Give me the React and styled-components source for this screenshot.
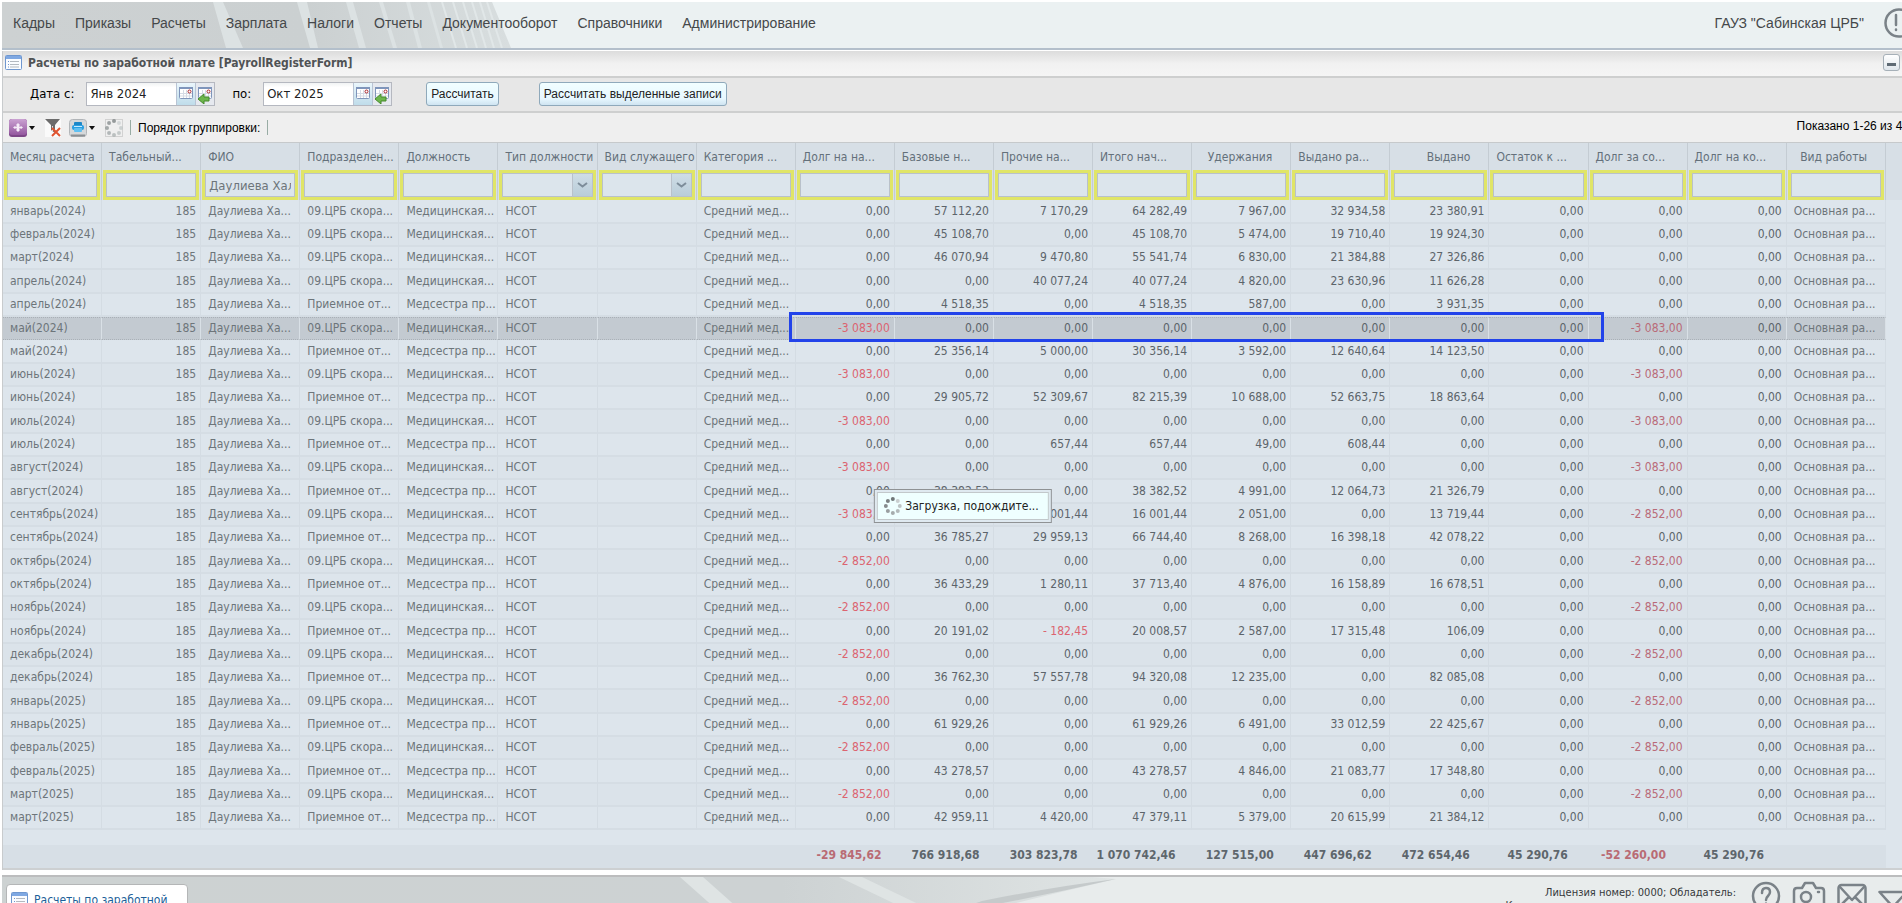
import React from 'react';
import styled, { createGlobalStyle } from 'styled-components';

const TAHOMA = '"DejaVu Sans Condensed", "DejaVu Sans", sans-serif';
const ARIAL = '"Liberation Sans", Arial, sans-serif';

const GlobalStyle = createGlobalStyle`
    * {
        box-sizing: border-box;
    }

    body {
        margin: 0;
        overflow: hidden;
        background: #ffffff;
        font-family: ${TAHOMA};
        font-size: 12px;
    }

    input, button, select {
        margin: 0;
        font-family: inherit;
    }
`

const PAGE = styled.div`
    height: 100vh;
    padding: 2px 0 0 2px;
    overflow: hidden;
`

/* top menu */

const HEADER = styled.header`
    display: grid;
    height: 48px;
    overflow: hidden;
    border-bottom: 2px solid #b3bfcb;
    background: #ebf1f2;
`

const BACKDROP = styled.svg`
    grid-area: 1 / 1;
    display: block;
`

const HEADERCONTENT = styled.div`
    grid-area: 1 / 1;
    display: flex;
    align-items: center;
    justify-content: space-between;
    height: 42px;
    padding-left: 11px;
    font-family: ${ARIAL};
    font-size: 14px;
    color: #45484a;
`

const MENU = styled.nav`
    display: flex;
    gap: 20px;
`

const MENULINK = styled.a`
    color: inherit;
    text-decoration: none;
`

const ACCOUNT = styled.div`
    display: flex;
    align-items: center;
    gap: 20px;
    margin-right: -12px;
    white-space: nowrap;
`

/* window */

const WINDOW = styled.main`
    border-left: 1px solid #c8cbcd;
    margin-top: 1px;
`

const TITLEBAR = styled.div`
    display: flex;
    align-items: center;
    gap: 6px;
    height: 27px;
    padding: 0 2px 2px;
    border-bottom: 2px solid #cecfcf;
    background: linear-gradient(#dcdcdc, #f1f1f1 50%, #f5f5f5);
`

const TITLE = styled.h1`
    flex: 1;
    margin: 0;
    font-size: 12px;
    color: #505355;
`

const MINIMIZE = styled.button`
    display: flex;
    align-items: flex-end;
    justify-content: center;
    width: 17px;
    height: 17px;
    padding: 0 0 4px;
    border: 1px solid #a6b0b8;
    border-radius: 3px;
    background: linear-gradient(#ffffff, #dfe6ec);
`

const DASH = styled.span`
    width: 9px;
    height: 3px;
    background: #5e6a74;
`

const FILTERBAR = styled.div`
    display: flex;
    align-items: center;
    height: 35px;
    padding: 0 0 2px 27px;
    border-bottom: 2px solid #cecfcf;
    background: #e7e7e7;
`

const DATELABEL = styled.label`
    margin-right: 12px;
    font-size: 13px;
    color: #000000;
`

const DATEFIELD = styled.div`
    display: flex;
    height: 24px;
    margin-right: ${props => props.$after}px;
    border: 1px solid #b5b8c0;
    background: #ffffff;
`

const DATEINPUT = styled.input`
    width: 89px;
    padding: 0 3px;
    border: 0;
    background: linear-gradient(#f1f3f4, #ffffff 20%);
    font-size: 13px;
    color: #222222;
`

const DATEBUTTON = styled.button`
    display: flex;
    align-items: center;
    justify-content: center;
    width: 19px;
    height: 22px;
    padding: 0;
    border: 0;
    border-left: 1px solid #b9c4d4;
    background: ${props => props.$plain ? '#e6e9ef' : 'linear-gradient(#eaf6fc, #bfdcea)'};
`

const PUSHBUTTON = styled.button`
    height: 24px;
    margin-right: 40px;
    padding: 0 4px;
    border: 1px solid #8fa9bb;
    border-radius: 3px;
    background: linear-gradient(#f1feff, #e8f8ff 70%, #cfe4f1);
    font-family: ${ARIAL};
    font-size: 12px;
    color: #222222;
`

const TOOLBAR = styled.div`
    display: flex;
    align-items: center;
    height: 30px;
    padding-left: 6px;
    border-bottom: 1px solid #c6c9cb;
    background: #efefef;
    font-family: ${ARIAL};
    color: #000000;
    overflow: hidden;
`

const TOOLBUTTON = styled.button`
    display: flex;
    align-items: center;
    height: 20px;
    padding: 0;
    margin-right: ${props => props.$after}px;
    border: 0;
    background: none;
`

const SEPARATOR = styled.span`
    width: 1px;
    height: 15px;
    margin-right: 7px;
    background: #98aca4;
`

const GROUPING = styled.span`
    flex: 1;
    display: flex;
    align-items: center;
    gap: 7px;
`

const SHOWN = styled.span`
    margin: 0 -7px 4px 0;
    white-space: nowrap;
`

/* grid */

const GRIDPANEL = styled.section`
    position: relative;
    border-bottom: 2px solid #cdd0d2;
    background: linear-gradient(#d7dfe6 57px, #dde5ec 57px);
`

const GRID = styled.table`
    width: calc(100% - 16px);
    table-layout: fixed;
    border-collapse: separate;
    border-spacing: 0;
    color: #6d757a;
`

const HEADCELL = styled.th`
    height: 27px;
    padding: 0 ${props => props.$right ? '18px' : '0'} 0 7px;
    border-right: 1px solid #c4ccd3;
    text-align: ${props => props.$right ? 'right' : 'left'};
    font-weight: normal;
    white-space: nowrap;
    color: #64707a;
`

const FILTERCELL = styled.td`
    height: 30px;
    padding: 0 1px;
    border-right: 1px solid #c4ccd3;
`

const FILTERBOX = styled.div`
    display: grid;
    height: 30px;
    border: 3px solid #e0e567;
    background: #dce5ec;
`

const FILTERINPUT = styled.input`
    grid-area: 1 / 1;
    width: 100%;
    min-width: 0;
    padding: 0 3px;
    border: 1px solid #b9c1ca;
    border-radius: 0;
    background: #dce5ec;
    font-size: 13px;
    color: #6d757a;
`

const FILTERSELECT = styled.select`
    grid-area: 1 / 1;
    width: 100%;
    min-width: 0;
    border: 1px solid #b9c1ca;
    border-radius: 0;
    background: #dce5ec;
    appearance: none;
`

const CHEVRON = styled.span`
    grid-area: 1 / 1;
    justify-self: end;
    display: flex;
    align-items: center;
    justify-content: center;
    width: 20px;
    margin: 1px;
    border-left: 1px solid #b9c1ca;
    background: linear-gradient(#cfdde6, #b9cdd9);
    pointer-events: none;
`

const ROW = styled.tr`
    height: 23px;
    background: #dde5ec;

    &:nth-child(3n + 1) {
        height: 24px;
    }

    &:nth-child(2n) {
        background: #dbe3ea;
    }
`

const CELL = styled.td`
    position: relative;
    padding: 0 ${props => props.$right ? '4px' : '0'} 0 7px;
    border-right: 1px solid #d4dce3;
    border-bottom: 2px solid #d5dde4;
    line-height: 21px;
    text-align: ${props => props.$right ? 'right' : 'left'};
    white-space: nowrap;
    color: ${props => props.$color};

    ${props => props.$selected && `
        border-right: 1px solid #d9e0e6;
        border-top: 1px dotted #a9b0b7;
        border-bottom: 1px dotted #a9b0b7;
        background: #c3cad1;
    `}
`

const MARK = styled.div`
    position: absolute;
    top: -6px;
    left: -7px;
    z-index: 1;
    width: calc(800% + 30px);
    height: 30px;
    border: 3px solid #2243ea;
`

const TOTALS = styled.div`
    display: grid;
    grid-template-columns: repeat(19, 1fr);
    width: calc(100% - 16px);
    height: 23px;
    margin-top: 15px;
    padding-right: 20px;
    background: #d7dfe6;
`

const TOTAL = styled.strong`
    padding-right: 4px;
    line-height: 21px;
    text-align: right;
    white-space: nowrap;
    color: ${props => props.$negative ? '#b96b74' : '#5e666c'};
`

const LOADING = styled.div`
    position: absolute;
    top: 50%;
    left: calc(50% + 10px);
    z-index: 2;
    padding: 2px;
    border: 1px solid #8f9294;
    background: #dfe9f0;
    transform: translate(-50%, -50%);
`

const LOADINGTEXT = styled.div`
    display: flex;
    align-items: center;
    gap: 4px;
    height: 28px;
    padding: 0 9px 0 6px;
    border: 1px solid #c2c8cb;
    background: #efffff;
    color: #222222;
    white-space: nowrap;
`

/* bottom bar */

const FOOTER = styled.footer`
    display: grid;
    height: 50px;
    margin-top: 5px;
    border-top: 2px solid #bcbdbe;
    background: #e8ecec;
    overflow: hidden;
`

const FOOTERCONTENT = styled.div`
    grid-area: 1 / 1;
    display: flex;
    justify-content: space-between;
    align-items: flex-start;
    padding-left: 4px;
`

const TASK = styled.a`
    display: flex;
    align-items: center;
    gap: 6px;
    width: 182px;
    height: 31px;
    margin-top: 7px;
    padding: 0 4px;
    border: 1px solid #b4b6b7;
    border-radius: 4px;
    background: #ffffff;
    color: #1d5f99;
    text-decoration: none;
`

const FOOTERRIGHT = styled.div`
    display: flex;
    align-items: flex-start;
    gap: 11px;
    margin: 4px -6px 0 0;
`

const LICENSE = styled.p`
    margin: 5px 4px 0 0;
    font-size: 11px;
    line-height: 13px;
    text-align: right;
    white-space: nowrap;
    color: #36393b;
`

const menu = ['Кадры', 'Приказы', 'Расчеты', 'Зарплата', 'Налоги', 'Отчеты', 'Документооборот', 'Справочники', 'Администрирование']

const columns = [
    { title: 'Месяц расчета' },
    { title: 'Табельный...', num: true },
    { title: 'ФИО', value: 'Даулиева Халида' },
    { title: 'Подразделен...' },
    { title: 'Должность' },
    { title: 'Тип должности', select: true },
    { title: 'Вид служащего', select: true },
    { title: 'Категория ...' },
    { title: 'Долг на на...', num: true },
    { title: 'Базовые н...', num: true },
    { title: 'Прочие на...', num: true },
    { title: 'Итого нач...', num: true },
    { title: 'Удержания', num: true, right: true },
    { title: 'Выдано ра...', num: true },
    { title: 'Выдано', num: true, right: true },
    { title: 'Остаток к ...', num: true },
    { title: 'Долг за со...', num: true },
    { title: 'Долг на ко...', num: true },
    { title: 'Вид работы', right: true },
]

const CRB = ['09.ЦРБ скора...', 'Медицинская...']
const RECEPTION = ['Приемное от...', 'Медсестра пр...']
const Z = '0,00'

const records = [
    ['январь(2024)', CRB, Z, '57 112,20', '7 170,29', '64 282,49', '7 967,00', '32 934,58', '23 380,91', Z],
    ['февраль(2024)', CRB, Z, '45 108,70', Z, '45 108,70', '5 474,00', '19 710,40', '19 924,30', Z],
    ['март(2024)', CRB, Z, '46 070,94', '9 470,80', '55 541,74', '6 830,00', '21 384,88', '27 326,86', Z],
    ['апрель(2024)', CRB, Z, Z, '40 077,24', '40 077,24', '4 820,00', '23 630,96', '11 626,28', Z],
    ['апрель(2024)', RECEPTION, Z, '4 518,35', Z, '4 518,35', '587,00', Z, '3 931,35', Z],
    ['май(2024)', CRB, '-3 083,00', Z, Z, Z, Z, Z, Z, '-3 083,00'],
    ['май(2024)', RECEPTION, Z, '25 356,14', '5 000,00', '30 356,14', '3 592,00', '12 640,64', '14 123,50', Z],
    ['июнь(2024)', CRB, '-3 083,00', Z, Z, Z, Z, Z, Z, '-3 083,00'],
    ['июнь(2024)', RECEPTION, Z, '29 905,72', '52 309,67', '82 215,39', '10 688,00', '52 663,75', '18 863,64', Z],
    ['июль(2024)', CRB, '-3 083,00', Z, Z, Z, Z, Z, Z, '-3 083,00'],
    ['июль(2024)', RECEPTION, Z, Z, '657,44', '657,44', '49,00', '608,44', Z, Z],
    ['август(2024)', CRB, '-3 083,00', Z, Z, Z, Z, Z, Z, '-3 083,00'],
    ['август(2024)', RECEPTION, Z, '38 382,52', Z, '38 382,52', '4 991,00', '12 064,73', '21 326,79', Z],
    ['сентябрь(2024)', CRB, '-3 083,00', Z, '16 001,44', '16 001,44', '2 051,00', Z, '13 719,44', '-2 852,00'],
    ['сентябрь(2024)', RECEPTION, Z, '36 785,27', '29 959,13', '66 744,40', '8 268,00', '16 398,18', '42 078,22', Z],
    ['октябрь(2024)', CRB, '-2 852,00', Z, Z, Z, Z, Z, Z, '-2 852,00'],
    ['октябрь(2024)', RECEPTION, Z, '36 433,29', '1 280,11', '37 713,40', '4 876,00', '16 158,89', '16 678,51', Z],
    ['ноябрь(2024)', CRB, '-2 852,00', Z, Z, Z, Z, Z, Z, '-2 852,00'],
    ['ноябрь(2024)', RECEPTION, Z, '20 191,02', '- 182,45', '20 008,57', '2 587,00', '17 315,48', '106,09', Z],
    ['декабрь(2024)', CRB, '-2 852,00', Z, Z, Z, Z, Z, Z, '-2 852,00'],
    ['декабрь(2024)', RECEPTION, Z, '36 762,30', '57 557,78', '94 320,08', '12 235,00', Z, '82 085,08', Z],
    ['январь(2025)', CRB, '-2 852,00', Z, Z, Z, Z, Z, Z, '-2 852,00'],
    ['январь(2025)', RECEPTION, Z, '61 929,26', Z, '61 929,26', '6 491,00', '33 012,59', '22 425,67', Z],
    ['февраль(2025)', CRB, '-2 852,00', Z, Z, Z, Z, Z, Z, '-2 852,00'],
    ['февраль(2025)', RECEPTION, Z, '43 278,57', Z, '43 278,57', '4 846,00', '21 083,77', '17 348,80', Z],
    ['март(2025)', CRB, '-2 852,00', Z, Z, Z, Z, Z, Z, '-2 852,00'],
    ['март(2025)', RECEPTION, Z, '42 959,11', '4 420,00', '47 379,11', '5 379,00', '20 615,99', '21 384,12', Z],
]

const totals = ['', '', '', '', '', '', '', '', '-29 845,62', '766 918,68', '303 823,78', '1 070 742,46', '127 515,00', '447 696,62', '472 654,46', '45 290,76', '-52 260,00', '45 290,76', '']

const SELECTED = 5

const toCells = ([month, place, debt, base, other, sum, held, paidBy, paid, debtEnd]) => [
    month, '185', 'Даулиева Ха...', ...place, 'НСОТ', '', 'Средний мед...',
    debt, base, other, sum, held, paidBy, paid, Z, debtEnd, Z, 'Основная ра...',
]

const cellColor = (text, index) => {
    if (text.startsWith('-')) {
        return index === 16 ? '#b96a78' : '#dc6470'
    }
    return index > 7 && index < 18 ? '#5c646a' : '#6d757a'
}

const FormIcon = () => (
    <svg width="17" height="15" viewBox="0 0 17 15">
        <rect x="0.5" y="0.5" width="16" height="14" rx="1" fill="#fafcff" stroke="#6f97cf" />
        <rect x="1" y="1" width="15" height="3" fill="#7fa8e2" />
        <path d="M3 6.5h1M3 9.5h1M3 12h1" stroke="#6f97cf" />
        <path d="M5 6.5h9M5 9.5h9M5 12h9" stroke="#b3b9c0" />
    </svg>
)

const CalendarIcon = ({ back }) => (
    <svg width="16" height="20" viewBox="0 0 16 20">
        <rect x="1.5" y="3.5" width="13" height="11" rx="1" fill="#ffffff" stroke="#7f95bb" />
        <rect x="1" y="3" width="14" height="2" fill="#7f95bb" />
        <path d="M2 9.5h12M2 12h12M5.5 6v8M8.5 6v8M11.5 6v8" stroke="#d5dbe5" />
        <circle cx="11.5" cy="7.5" r="1.5" fill="#ffffff" stroke="#a8232a" />
        {back && <path d="M1 15l6-5v3h5v4H7v3z" fill="#6db64c" stroke="#468a2c" />}
    </svg>
)

const Caret = () => (
    <svg width="11" height="18" viewBox="0 0 11 18">
        <path d="M2 7h6l-3 4z" fill="#111111" />
    </svg>
)

const dots = ['#6f7678', '#c9cfd0', '#bcc3c4', '#b3babb', '#a5acad', '#999fa1', '#858b8d', '#7b8183']

const Spinner = ({ faded }) => (
    <svg width="18" height="18" viewBox="0 0 18 18">
        {faded && <rect x="0.5" y="0.5" width="17" height="17" fill="none" stroke="#b5b5b5" strokeDasharray="1 1" />}
        {dots.map((color, i) => (
            <circle
                key={color}
                cx={9 + 7 * Math.sin(i * Math.PI / 4)}
                cy={9 - 7 * Math.cos(i * Math.PI / 4)}
                r="2"
                fill={color}
                opacity={faded ? 0.7 : 1}
            />
        ))}
    </svg>
)

const AddIcon = () => (
    <svg width="18" height="18" viewBox="0 0 18 18">
        <defs>
            <linearGradient id="violet" x2="0" y2="1">
                <stop offset="0" stopColor="#cba2d2" />
                <stop offset="1" stopColor="#94579f" />
            </linearGradient>
        </defs>
        <rect width="18" height="18" rx="3" fill="#7c4687" />
        <rect width="18" height="16" rx="3" fill="url(#violet)" />
        <path d="M9 4l2 2-1 1 1 1 1-1 2 1.500-2 1.500-1-1-1 1 1 1-2 2-2-2 1-1-1-1-1 1-2-1.500L6 7l1 1 1-1-1-1z" fill="#f6ecf8" />
    </svg>
)

const FunnelIcon = () => (
    <svg width="16" height="18" viewBox="0 0 16 18">
        <rect width="16" height="18" fill="#fafafa" />
        <path d="M0 0h15l-5 6v8l-4-3V6z" fill="#6b6b6b" />
        <path d="M7 7v5l1 1V7z" fill="#e4e4e4" />
        <path d="M7 9l8 8M15 9l-8 8" stroke="#e0532f" strokeWidth="2" />
    </svg>
)

const PrintIcon = () => (
    <svg width="18" height="18" viewBox="0 0 18 18">
        <rect x="0.5" y="0.5" width="17" height="17" rx="3" fill="#d5d8da" stroke="#b1b5b8" />
        <path d="M2 16.5h14" stroke="#8b9094" strokeWidth="2" />
        <rect x="5" y="3" width="8" height="4" rx="1" fill="#1b87c8" />
        <rect x="3" y="6" width="12" height="5" rx="2" fill="#2b9fe0" />
        <rect x="5" y="9" width="8" height="4" rx="1" fill="#5fc0f2" />
        <path d="M5 7.5h8" stroke="#c9ecff" />
    </svg>
)

const HeaderBackdrop = () => (
    <BACKDROP width="520" height="46" viewBox="0 0 520 46" aria-hidden="true">
        <defs>
            <linearGradient id="steel">
                <stop offset="0" stopColor="#cdd1d2" />
                <stop offset="0.6" stopColor="#cbd0d1" />
                <stop offset="1" stopColor="#d8dedf" />
            </linearGradient>
        </defs>
        <path d="M0 0h490l19 46H0z" fill="url(#steel)" />
        <path d="M211 0h10l20 46h-17zM295 0h10l11 46h-8zM344 0h7l13 46h-7zM377 0h4l14 46h-4zM404 0h4l12 46h-4zM425 0h3l13 46h-3z" fill="#dce2e3" />
        <path d="M440 0l14 46M451 0l14 46M461 0l14 46M470 0l14 46M478 0l14 46M485 0l15 46" stroke="#e1e7e8" strokeWidth="2" />
    </BACKDROP>
)

const FooterBackdrop = () => (
    <BACKDROP width="1120" height="48" viewBox="0 0 1120 48" aria-hidden="true">
        <defs>
            <linearGradient id="slate">
                <stop offset="0" stopColor="#cdd2d2" />
                <stop offset="0.7" stopColor="#cdd2d3" />
                <stop offset="1" stopColor="#dfe4e4" />
            </linearGradient>
        </defs>
        <path d="M0 0h1090l24 2q-60 14-124 30l-60 16H0z" fill="url(#slate)" />
        <path d="M1114 2q-60 14-124 26l-60 20h-20l70-24q70-14 134-22z" fill="#c5cacb" />
        <path d="M678 0h23l54 48h-23zM837 0h23l100 48h-23z" fill="#dfe4e4" />
    </BACKDROP>
)

const outline = { fill: 'none', stroke: '#7a8288', strokeWidth: 2.5, strokeLinejoin: 'round', strokeLinecap: 'round' }

const AlertIcon = () => (
    <svg width="30" height="30" viewBox="0 0 30 30" {...outline}>
        <circle cx="15" cy="15" r="13.5" />
        <path d="M12 7v10M12 21.5v.5" />
    </svg>
)

const HelpIcon = () => (
    <svg width="30" height="30" viewBox="0 0 30 30" {...outline}>
        <circle cx="15" cy="15" r="13" />
        <path d="M11 12q0-5 4-5t4 4q0 2-2 4t-2 4M15 22.5v.5" />
    </svg>
)

const CameraIcon = () => (
    <svg width="34" height="30" viewBox="0 0 34 30" {...outline}>
        <path d="M5 7h5l3-5h8l3 5h5q3 0 3 3v15q0 3-3 3H5q-3 0-3-3V10q0-3 3-3z" />
        <circle cx="14" cy="16" r="5" />
        <path d="M26 11h1" />
    </svg>
)

const MailIcon = () => (
    <svg width="30" height="30" viewBox="0 0 30 30" {...outline}>
        <rect x="1.5" y="4" width="27" height="22" rx="3" />
        <path d="M3 6l12 13L27 6M3 25l9-9M27 25l-9-9" />
    </svg>
)

const TriangleIcon = () => (
    <svg width="30" height="30" viewBox="0 0 30 30" {...outline}>
        <path d="M1.5 11h27L15 26z" />
    </svg>
)

const Filter = ({ column }) => (
    <FILTERBOX>
        {column.select ? (
            <>
                <FILTERSELECT aria-label={column.title}><option></option></FILTERSELECT>
                <CHEVRON>
                    <svg width="11" height="8" viewBox="0 0 11 8">
                        <path d="M1 2l4.500 3.500L10 2" fill="none" stroke="#7d8d9a" strokeWidth="2" />
                    </svg>
                </CHEVRON>
            </>
        ) : (
            <FILTERINPUT aria-label={column.title} defaultValue={column.value} />
        )}
    </FILTERBOX>
)

const PayrollGrid = () => (
    <GRIDPANEL>
        <GRID>
            <thead>
                <tr>
                    {columns.map(column => (
                        <HEADCELL key={column.title} $right={column.right}>{column.title}</HEADCELL>
                    ))}
                </tr>
                <tr>
                    {columns.map(column => (
                        <FILTERCELL key={column.title}><Filter column={column} /></FILTERCELL>
                    ))}
                </tr>
            </thead>
            <tbody>
                {records.map((record, row) => (
                    <ROW key={row}>
                        {toCells(record).map((text, index) => (
                            <CELL
                                key={index}
                                $right={columns[index].num}
                                $color={cellColor(text, index)}
                                $selected={row === SELECTED}
                            >
                                {text}
                                {row === SELECTED && index === 8 && <MARK />}
                            </CELL>
                        ))}
                    </ROW>
                ))}
            </tbody>
        </GRID>
        <TOTALS>
            {totals.map((total, index) => (
                <TOTAL key={index} $negative={total.startsWith('-')}>{total}</TOTAL>
            ))}
        </TOTALS>
        <LOADING role="status">
            <LOADINGTEXT><Spinner />Загрузка, подождите...</LOADINGTEXT>
        </LOADING>
    </GRIDPANEL>
)

const App = () => {
    return (
        <>
            <GlobalStyle />
            <PAGE>
                <HEADER>
                    <HeaderBackdrop />
                    <HEADERCONTENT>
                        <MENU>
                            {menu.map(item => <MENULINK key={item} href="#">{item}</MENULINK>)}
                        </MENU>
                        <ACCOUNT>
                            ГАУЗ "Сабинская ЦРБ"
                            <AlertIcon />
                        </ACCOUNT>
                    </HEADERCONTENT>
                </HEADER>
                <WINDOW>
                    <TITLEBAR>
                        <FormIcon />
                        <TITLE>Расчеты по заработной плате [PayrollRegisterForm]</TITLE>
                        <MINIMIZE aria-label="Свернуть"><DASH /></MINIMIZE>
                    </TITLEBAR>
                    <FILTERBAR>
                        <DATELABEL htmlFor="from">Дата с:</DATELABEL>
                        <DATEFIELD $after={17}>
                            <DATEINPUT id="from" defaultValue="Янв 2024" />
                            <DATEBUTTON aria-label="Выбрать дату"><CalendarIcon /></DATEBUTTON>
                            <DATEBUTTON $plain aria-label="Предыдущая дата"><CalendarIcon back /></DATEBUTTON>
                        </DATEFIELD>
                        <DATELABEL htmlFor="to">по:</DATELABEL>
                        <DATEFIELD $after={34}>
                            <DATEINPUT id="to" defaultValue="Окт 2025" />
                            <DATEBUTTON aria-label="Выбрать дату"><CalendarIcon /></DATEBUTTON>
                            <DATEBUTTON $plain aria-label="Предыдущая дата"><CalendarIcon back /></DATEBUTTON>
                        </DATEFIELD>
                        <PUSHBUTTON>Рассчитать</PUSHBUTTON>
                        <PUSHBUTTON>Рассчитать выделенные записи</PUSHBUTTON>
                    </FILTERBAR>
                    <TOOLBAR>
                        <TOOLBUTTON $after={7} aria-label="Добавить"><AddIcon /><Caret /></TOOLBUTTON>
                        <TOOLBUTTON $after={8} aria-label="Сбросить фильтр"><FunnelIcon /></TOOLBUTTON>
                        <TOOLBUTTON $after={7} aria-label="Печать"><PrintIcon /><Caret /></TOOLBUTTON>
                        <TOOLBUTTON $after={7} aria-label="Обновить"><Spinner faded /></TOOLBUTTON>
                        <SEPARATOR />
                        <GROUPING>
                            Порядок группировки:
                            <SEPARATOR />
                        </GROUPING>
                        <SHOWN>Показано 1-26 из 40</SHOWN>
                    </TOOLBAR>
                    <PayrollGrid />
                </WINDOW>
                <FOOTER>
                    <FooterBackdrop />
                    <FOOTERCONTENT>
                        <TASK href="#"><FormIcon />Расчеты по заработной</TASK>
                        <FOOTERRIGHT>
                            <LICENSE>
                                Лицензия номер: 0000; Обладатель:<br />
                                Ключ не для коммерческого использования
                            </LICENSE>
                            <HelpIcon />
                            <CameraIcon />
                            <MailIcon />
                            <TriangleIcon />
                        </FOOTERRIGHT>
                    </FOOTERCONTENT>
                </FOOTER>
            </PAGE>
        </>
    );
};

export default App;
